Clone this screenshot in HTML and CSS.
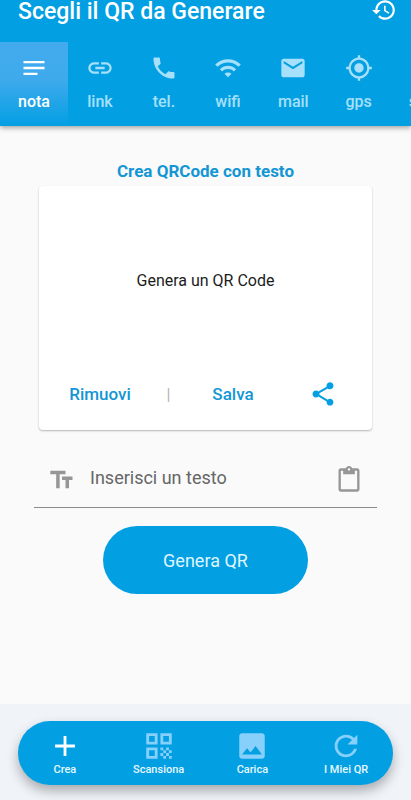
FILE: index.html
```html
<!DOCTYPE html>
<html lang="it">
<head>
<meta charset="utf-8">
<meta name="viewport" content="width=device-width, initial-scale=1">
<title>Scegli il QR da Generare</title>
<link rel="stylesheet" href="styles.css">
</head>
<body>
<header class="app-bar">
  <div class="title-row">
    <h1 class="title">Scegli il QR da Generare</h1>
    <button class="icon-button history" type="button" aria-label="Cronologia">
      <svg class="icon" viewBox="0 0 24 24"><path d="M13 3c-4.97 0-9 4.03-9 9H1l3.89 3.89.07.14L9 12H6c0-3.87 3.13-7 7-7s7 3.13 7 7-3.13 7-7 7c-1.93 0-3.68-.79-4.94-2.06l-1.42 1.42C8.27 19.99 10.51 21 13 21c4.97 0 9-4.03 9-9s-4.03-9-9-9zm-1 5v5l4.28 2.54.72-1.21-3.5-2.08V8H12z"/></svg>
    </button>
  </div>
  <nav class="tabs">
    <button class="tab active" type="button">
      <svg class="icon" viewBox="0 0 24 24"><path d="M3 18h12v-2H3v2zM3 6v2h18V6H3zm0 7h18v-2H3v2z"/></svg>
      <span>nota</span>
    </button>
    <button class="tab" type="button">
      <svg class="icon" viewBox="0 0 24 24"><path d="M3.9 12c0-1.71 1.39-3.1 3.1-3.1h4V7H7c-2.76 0-5 2.24-5 5s2.24 5 5 5h4v-1.900H7c-1.71 0-3.100-1.390-3.100-3.100zM8 13h8v-2H8v2zm9-6h-4v1.900h4c1.710 0 3.100 1.390 3.100 3.100s-1.390 3.100-3.100 3.100h-4V17h4c2.760 0 5-2.240 5-5s-2.240-5-5-5z"/></svg>
      <span>link</span>
    </button>
    <button class="tab" type="button">
      <svg class="icon" viewBox="0 0 24 24"><path d="M6.620 10.790c1.440 2.830 3.760 5.140 6.590 6.590l2.200-2.200c.27-.27.67-.36 1.020-.24 1.120.37 2.330.57 3.570.57.55 0 1 .45 1 1V20c0 .55-.45 1-1 1-9.390 0-17-7.610-17-17 0-.55.45-1 1-1h3.500c.55 0 1 .45 1 1 0 1.250.2 2.450.57 3.570.11.35.03.74-.25 1.020l-2.200 2.200z"/></svg>
      <span>tel.</span>
    </button>
    <button class="tab" type="button">
      <svg class="icon" viewBox="0 0 24 24"><path d="M1 9l2 2c4.970-4.970 13.030-4.970 18 0l2-2C16.930 2.930 7.080 2.930 1 9zm8 8l3 3 3-3c-1.650-1.660-4.340-1.660-6 0zm-4-4l2 2c2.760-2.760 7.240-2.760 10 0l2-2C15.140 9.140 8.870 9.140 5 13z"/></svg>
      <span>wifi</span>
    </button>
    <button class="tab" type="button">
      <svg class="icon" viewBox="0 0 24 24"><path d="M20 4H4c-1.100 0-1.990.9-1.990 2L2 18c0 1.100.9 2 2 2h16c1.100 0 2-.9 2-2V6c0-1.100-.9-2-2-2zm0 4l-8 5-8-5V6l8 5 8-5v2z"/></svg>
      <span>mail</span>
    </button>
    <button class="tab" type="button">
      <svg class="icon" viewBox="0 0 24 24"><path d="M12 8c-2.210 0-4 1.790-4 4s1.790 4 4 4 4-1.790 4-4-1.790-4-4-4zm8.940 3A8.994 8.994 0 0 0 13 3.060V1h-2v2.060A8.994 8.994 0 0 0 3.060 11H1v2h2.060A8.994 8.994 0 0 0 11 20.940V23h2v-2.060A8.994 8.994 0 0 0 20.940 13H23v-2h-2.060zM12 19c-3.870 0-7-3.130-7-7s3.130-7 7-7 7 3.130 7 7-3.130 7-7 7z"/></svg>
      <span>gps</span>
    </button>
    <button class="tab" type="button">
      <svg class="icon" viewBox="0 0 24 24"><path d="M20 2H4c-1.100 0-2 .9-2 2v18l4-4h14c1.100 0 2-.9 2-2V4c0-1.100-.9-2-2-2z"/></svg>
      <span>sms</span>
    </button>
  </nav>
</header>

<main class="content">
  <h2 class="heading">Crea QRCode con testo</h2>
  <section class="card">
    <p class="preview">Genera un QR Code</p>
    <div class="actions">
      <button class="text-button" type="button">Rimuovi</button>
      <span class="divider">|</span>
      <button class="text-button" type="button">Salva</button>
      <button class="icon-button share" type="button" aria-label="Condividi">
        <svg class="icon" viewBox="0 0 24 24"><path d="M18 16.080c-.76 0-1.440.3-1.960.77L8.910 12.700c.05-.23.09-.46.09-.7s-.04-.47-.09-.7l7.050-4.110c.54.5 1.250.81 2.040.81 1.660 0 3-1.340 3-3s-1.340-3-3-3-3 1.340-3 3c0 .24.04.47.09.7L8.040 9.810C7.500 9.310 6.790 9 6 9c-1.660 0-3 1.340-3 3s1.340 3 3 3c.79 0 1.500-.31 2.040-.81l7.120 4.160c-.05.21-.08.43-.08.65 0 1.610 1.310 2.920 2.920 2.920s2.920-1.310 2.920-2.920-1.310-2.920-2.920-2.920z"/></svg>
      </button>
    </div>
  </section>
  <div class="field">
    <svg class="icon" viewBox="0 0 24 24" aria-hidden="true"><path d="M2 4v3h5v12h3V7h5V4H2zm19 5h-9v3h3v7h3v-7h3V9z"/></svg>
    <input class="text-input" type="text" placeholder="Inserisci un testo" aria-label="Inserisci un testo">
    <button class="icon-button" type="button" aria-label="Incolla">
      <svg class="icon" viewBox="0 0 24 24"><path d="M19 2h-4.180C14.400.84 13.300 0 12 0c-1.300 0-2.400.84-2.820 2H5c-1.100 0-2 .9-2 2v16c0 1.100.9 2 2 2h14c1.100 0 2-.9 2-2V4c0-1.100-.9-2-2-2zm-7 0c.55 0 1 .45 1 1s-.45 1-1 1-1-.45-1-1 .45-1 1-1zm7 18H5V4h2v3h10V4h2v16z"/></svg>
    </button>
  </div>
  <button class="generate" type="button">Genera QR</button>
</main>

<footer class="footer">
  <nav class="dock">
    <button class="dock-item active" type="button">
      <svg class="icon" viewBox="0 0 24 24"><path d="M19 13h-6v6h-2v-6H5v-2h6V5h2v6h6v2z"/></svg>
      <span>Crea</span>
    </button>
    <button class="dock-item" type="button">
      <svg class="icon" viewBox="0 0 24 24"><path d="M3 11h8V3H3v8zm2-6h4v4H5V5zM3 21h8v-8H3v8zm2-6h4v4H5v-4zM13 3v8h8V3h-8zm6 6h-4V5h4v4zM19 19h2v2h-2zM13 13h2v2h-2zM15 15h2v2h-2zM13 17h2v2h-2zM15 19h2v2h-2zM17 17h2v2h-2zM17 13h2v2h-2zM19 15h2v2h-2z"/></svg>
      <span>Scansiona</span>
    </button>
    <button class="dock-item" type="button">
      <svg class="icon" viewBox="0 0 24 24"><path d="M21 19V5c0-1.100-.9-2-2-2H5c-1.100 0-2 .9-2 2v14c0 1.100.9 2 2 2h14c1.100 0 2-.9 2-2zM8.500 13.500l2.500 3.010L14.500 12l4.500 6H5l3.500-4.500z"/></svg>
      <span>Carica</span>
    </button>
    <button class="dock-item" type="button">
      <svg class="icon" viewBox="0 0 24 24"><path d="M17.650 6.350A7.958 7.958 0 0 0 12 4c-4.420 0-7.990 3.580-7.990 8s3.570 8 7.990 8c3.730 0 6.840-2.550 7.730-6h-2.080A5.990 5.990 0 0 1 12 18c-3.310 0-6-2.690-6-6s2.690-6 6-6c1.660 0 3.140.69 4.220 1.780L13 11h7V4l-2.350 2.350z"/></svg>
      <span>I Miei QR</span>
    </button>
  </nav>
</footer>
</body>
</html>
```

FILE: styles.css
```css
* {
  box-sizing: border-box;
}

body {
  margin: 0;
  min-height: 100vh;
  display: flex;
  flex-direction: column;
  background: #fafafa;
  font-family: Roboto, "Liberation Sans", sans-serif;
  color: #1c1c1c;
  overflow-x: hidden;
}

button {
  border: 0;
  padding: 0;
  background: none;
  font: inherit;
  color: inherit;
}

.icon {
  display: block;
  flex: none;
  width: 28px;
  height: 28px;
  fill: currentColor;
}

.app-bar {
  background: #039fe3;
  color: #fff;
  box-shadow: 0 2px 5px rgba(0, 0, 0, 0.35);
}

.title-row {
  display: flex;
  justify-content: space-between;
  height: 42px;
  padding: 0 14px 0 18px;
}

.title {
  margin: 0;
  font-size: 23px;
  line-height: 24px;
  font-weight: 500;
  white-space: nowrap;
}

.history .icon {
  width: 26px;
  height: 26px;
}

.history {
  height: 20px;
  display: flex;
  align-items: center;
}

.tabs {
  display: flex;
  overflow: hidden;
}

.tab {
  flex: none;
  min-width: 64px;
  height: 84px;
  padding: 12px 18px;
  display: flex;
  flex-direction: column;
  align-items: center;
  gap: 10px;
  font-size: 16px;
  line-height: 20px;
  font-weight: 500;
  color: #a6e0fa;
}

.tab.active {
  color: #fff;
  background: linear-gradient(#42abee 0%, #3eaaec 45%, #039fe3 100%);
}

.content {
  flex: 1;
  display: flex;
  flex-direction: column;
  align-items: center;
  padding: 34px 34px 40px;
}

.heading {
  margin: 0 0 4px;
  font-size: 17px;
  line-height: 22px;
  font-weight: 700;
  color: #1496d4;
}

.card {
  align-self: stretch;
  margin: 0 5px;
  background: #fff;
  border-radius: 4px;
  box-shadow: 0 1px 2px rgba(0, 0, 0, 0.28);
}

.preview {
  margin: 0;
  padding: 84px 0 76px;
  font-size: 16px;
  line-height: 22px;
  text-align: center;
}

.actions {
  display: grid;
  grid-template-columns: 122fr 15fr 114fr 66fr;
  align-items: center;
  justify-items: center;
  height: 62px;
  padding: 0 16px 10px 0;
}

.text-button {
  font-size: 17px;
  line-height: 22px;
  font-weight: 500;
  color: #1496d4;
}

.divider {
  font-size: 16px;
  color: #b5b5b5;
}

.share {
  color: #039fe3;
}

.field {
  align-self: stretch;
  display: flex;
  align-items: center;
  gap: 14px;
  height: 56px;
  margin-top: 22px;
  padding: 0 14px;
  border-bottom: 1px solid #8c8c8c;
  color: #969696;
}

.text-input {
  flex: 1;
  min-width: 0;
  border: 0;
  padding: 0 0 4px;
  background: none;
  font: 400 18px/24px Roboto, "Liberation Sans", sans-serif;
  color: #1c1c1c;
}

.text-input::placeholder {
  color: #666;
  opacity: 1;
}

.generate {
  width: 60%;
  height: 68px;
  margin-top: 18px;
  border-radius: 34px;
  background: #039fe3;
  color: #dff6ff;
  font-size: 18px;
}

.footer {
  padding: 17px 18px 15px;
  background: #f0f4f9;
}

.dock {
  display: flex;
  height: 64px;
  border-radius: 32px;
  background: #039fe3;
  box-shadow: 0 6px 12px rgba(0, 0, 0, 0.3);
}

.dock-item {
  flex: 1;
  display: flex;
  flex-direction: column;
  align-items: center;
  padding-top: 8px;
  font-size: 11px;
  line-height: 14px;
  font-weight: 500;
  color: #e6f8ff;
}

.dock-item .icon {
  width: 34px;
  height: 34px;
  color: #86d0fb;
}

.dock-item.active .icon {
  color: #fff;
}
```
